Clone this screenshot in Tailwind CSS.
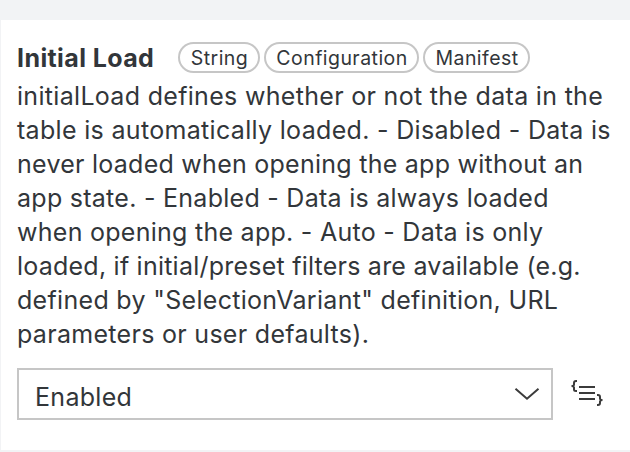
<!DOCTYPE html>
<html lang="en">
<head>
<meta charset="utf-8">
<title>Initial Load</title>
<script src="https://cdn.jsdelivr.net/npm/@tailwindcss/browser@4"></script>
</head>
<body class="h-[452px] w-[630px] overflow-hidden bg-[#f2f3f5] pt-5 pb-0.5 pl-px font-['Inter',sans-serif] text-[#32363a]">
<main class="h-[430px] bg-white pt-[22px] pl-4">
  <header class="flex h-[31px] items-center">
    <h1 class="w-[161px] whitespace-nowrap pt-0.5 text-[25px] leading-[31px] font-bold tracking-[0.4px]">Initial Load</h1>
    <div class="flex gap-1 text-[19.5px] leading-[27px] tracking-[0.45px]">
      <span class="flex h-[31px] w-[82px] items-center justify-center rounded-full border-2 border-[#c6c6c6] pt-0.5 pl-px">String</span>
      <span class="flex h-[31px] w-[155px] items-center justify-center rounded-full border-2 border-[#c6c6c6] pt-0.5 pl-px">Configuration</span>
      <span class="flex h-[31px] w-[107px] items-center justify-center rounded-full border-2 border-[#c6c6c6] pt-0.5 pl-px">Manifest</span>
    </div>
  </header>
  <p class="mt-[6px] whitespace-nowrap text-[25px] leading-[34px]">
    <span class="block tracking-[0.31px]">initialLoad defines whether or not the data in the</span>
    <span class="block tracking-[0.32px]">table is automatically loaded. - Disabled - Data is</span>
    <span class="block tracking-[0.26px]">never loaded when opening the app without an</span>
    <span class="block tracking-[0.27px]">app state. - Enabled - Data is always loaded</span>
    <span class="block tracking-[0.27px]">when opening the app. - Auto - Data is only</span>
    <span class="block tracking-[0.23px]">loaded, if initial/preset filters are available (e.g.</span>
    <span class="block tracking-[0.31px]">defined by "SelectionVariant" definition, URL</span>
    <span class="block tracking-[0.3px]">parameters or user defaults).</span>
  </p>
  <div class="mt-[17px] flex items-center">
    <div class="flex h-[52px] w-[536px] items-center justify-between border-2 border-[#c6c6c6] pt-1.5 pr-[11px] pl-4 text-[25px] leading-[34px] tracking-[0.3px]">
      <span>Enabled</span>
      <svg class="mb-1.5 h-[14px] w-[26px]" viewBox="0 0 26 14" fill="none" stroke="#3b3b3b" stroke-width="2"><path d="M1.500 1.700 13 11.700 24.500 1.700"/></svg>
    </div>
    <svg class="ml-[18px] h-[28px] w-[33px]" viewBox="0 0 33 28" fill="none" stroke="#3b3b3b" stroke-width="2"><path d="M6 1H5Q3 1 3 3V4.500Q3 6 0.500 6Q3 6 3 7.500V9.500Q3 11 5 11H6M8 7H24M8 13H24M8 19H24M26 15H27Q29 15 29 17V18.500Q29 20 31.500 20Q29 20 29 21.500V23Q29 25 27 25H26"/></svg>
  </div>
</main>
</body>
</html>
